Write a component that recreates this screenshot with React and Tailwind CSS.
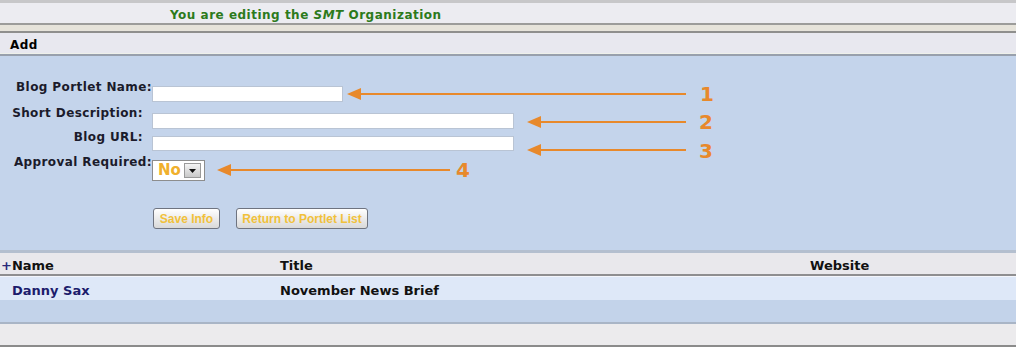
import React from "react";

function Arrow({ tipX, y, endX }) {
  return (
    <g>
      <line x1={tipX + 10} y1={y} x2={endX} y2={y} stroke="#e8892b" strokeWidth="2" />
      <polygon points={`${tipX},${y} ${tipX + 14},${y - 6} ${tipX + 14},${y + 6}`} fill="#e8892b" />
    </g>
  );
}

export default function App() {
  const label = "text-[12px] tracking-[0.4px] leading-[13px] font-bold text-[#1b1b2b] text-right w-[152px] shrink-0";
  return (
    <div className="relative w-[1016px] h-[347px] overflow-hidden bg-white font-['DejaVu_Sans',sans-serif]">
      {/* top band */}
      <div className="h-[3px] bg-[#c7c7c9]" />
      <div className="h-[20px] bg-[#ececf1] pl-[170px] text-[12px] tracking-[0.5px] leading-[24px] font-bold text-[#2c7a1c]">
        You are editing the <i>SMT</i> Organization
      </div>
      <div className="h-[2px] bg-[#9c9c9a]" />
      <div className="h-[6px] bg-[#e6e3da]" />
      <div className="h-[2px] bg-[#8f8f8d]" />
      <div className="h-[21px] bg-[#e8e8ef] pl-[10px] text-[12px] tracking-[0.4px] leading-[25px] font-bold text-black border-b border-[#eef0ea]">
        Add
      </div>
      <div className="h-[2px] bg-[#98a0ac]" />

      {/* form panel */}
      <div className="h-[194px] bg-[#c4d4eb] pt-[25px]">
        <div className="flex h-[26px]">
          <div className={label}>Blog Portlet Name:</div>
          <div className="mt-[5px] w-[191px] h-[16px] bg-white border border-[#b9c4d4]" />
        </div>
        <div className="flex h-[24px]">
          <div className={label + " pr-[9px]"}>Short Description:</div>
          <div className="mt-[6px] w-[362px] h-[16px] bg-white border border-[#b9c4d4]" />
        </div>
        <div className="flex h-[25px]">
          <div className={label + " pr-[9px]"}>Blog URL:</div>
          <div className="mt-[5px] w-[362px] h-[15px] bg-white border border-[#b9c4d4]" />
        </div>
        <div className="flex h-[24px]">
          <div className={label}>Approval Required:</div>
          <div className="mt-[4px] w-[53px] h-[21px] bg-white border border-[#8d8d8d] flex items-center">
            <span className="pl-[5px] text-[15px] leading-none font-bold text-[#f0b02c] w-[31px]">No</span>
            <span className="w-[17px] h-[15px] bg-gradient-to-b from-[#f4f4f4] to-[#c9c9c9] border border-[#9a9a9a] flex items-center justify-center">
              <svg width="7" height="4" viewBox="0 0 7 4"><polygon points="0,0 7,0 3.5,4" fill="#111" /></svg>
            </span>
          </div>
        </div>
        <div className="flex gap-[16px] pl-[153px] mt-[28px]">
          <div className="w-[67px] h-[21px] rounded-[3px] border border-[#6f7480] bg-gradient-to-b from-[#ffffff] to-[#d9d9d9] flex items-center justify-center text-[12px] font-bold text-[#f1c13a] font-['Liberation_Sans',sans-serif]">
            Save Info
          </div>
          <div className="w-[132px] h-[21px] rounded-[3px] border border-[#6f7480] bg-gradient-to-b from-[#ffffff] to-[#d9d9d9] flex items-center justify-center text-[12px] font-bold text-[#f1c13a] font-['Liberation_Sans',sans-serif]">
            Return to Portlet List
          </div>
        </div>
      </div>

      {/* table */}
      <div className="h-[3px] bg-[#b4bfcf]" />
      <div className="h-[21px] bg-[#e9e8ec] grid grid-cols-[280px_530px_1fr] text-[13px] leading-[26px] font-bold text-[#111]">
        <div className="pl-[1px]"><span className="text-[#2a2a7a]">+</span>Name</div>
        <div>Title</div>
        <div>Website</div>
      </div>
      <div className="h-[2px] bg-[#8e8e90]" />
      <div className="h-[1px] bg-[#f3f5fb]" />
      <div className="h-[23px] bg-[#dee8f8] grid grid-cols-[280px_530px_1fr] text-[13px] leading-[27px] font-bold">
        <div className="pl-[12px] text-[#1c1c6c]">Danny Sax</div>
        <div className="text-[#111]">November News Brief</div>
        <div />
      </div>
      <div className="h-[22px] bg-[#c3d3ea]" />
      <div className="h-[2px] bg-[#a9b5c6]" />
      <div className="h-[21px] bg-[#ecebed]" />
      <div className="h-[2px] bg-[#8b8b8b]" />

      {/* annotations */}
      <svg className="absolute inset-0 pointer-events-none" width="1016" height="347">
        <Arrow tipX={347} y={94} endX={686} />
        <Arrow tipX={527} y={122} endX={686} />
        <Arrow tipX={527} y={150} endX={686} />
        <Arrow tipX={217} y={170} endX={450} />
      </svg>
      <span className="absolute left-[700px] top-[82px] text-[20px] leading-[24px] font-bold text-[#e8892b]">1</span>
      <span className="absolute left-[699px] top-[110px] text-[20px] leading-[24px] font-bold text-[#e8892b]">2</span>
      <span className="absolute left-[699px] top-[139px] text-[20px] leading-[24px] font-bold text-[#e8892b]">3</span>
      <span className="absolute left-[456px] top-[158px] text-[20px] leading-[24px] font-bold text-[#e8892b]">4</span>
    </div>
  );
}
